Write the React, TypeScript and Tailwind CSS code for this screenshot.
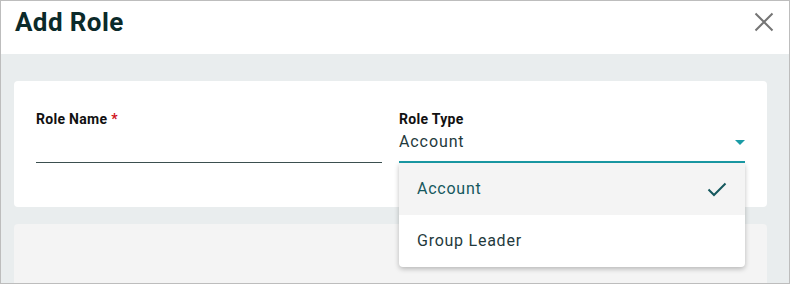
import React from 'react';

const CloseIcon = () => (
  <svg width="20" height="20" viewBox="0 0 20 20" fill="none">
    <path d="M1.5 1.5 L18.5 18.5 M18.5 1.5 L1.5 18.5" stroke="#757575" strokeWidth="2" />
  </svg>
);

const CheckIcon = () => (
  <svg width="20" height="15" viewBox="0 0 20 15" fill="none">
    <path d="M1.5 7.5 L7 13 L18.5 1.5" stroke="#15585e" strokeWidth="2" />
  </svg>
);

const App: React.FC = () => {
  return (
    <div
      className="w-[790px] h-[284px] border border-[#bdbdbd] flex flex-col overflow-hidden bg-[#e9edee]"
      style={{ fontFamily: 'Roboto, "Noto Sans", sans-serif' }}
    >
      {/* header */}
      <div className="h-[53px] shrink-0 bg-white flex items-center justify-between pl-[14px] pr-[15px]">
        <h1 className="text-[26px] font-bold text-[#0b2a2a] leading-none tracking-[0.4px] -mt-[12px]">Add Role</h1>
        <button className="-mt-[12px]">
          <CloseIcon />
        </button>
      </div>

      {/* body */}
      <div className="flex-1 pl-[13px] pr-[22px] pt-[27px] flex flex-col gap-[17px]">
        <div className="bg-white rounded-[4px] h-[126px] px-[22px] pt-[30px] flex gap-[17px]">
          <div className="flex-1 flex flex-col">
            <label className="text-[14px] font-bold text-[#111] leading-4 tracking-[0.3px]">
              Role Name <span className="text-[#d0121b]">*</span>
            </label>
            <div className="h-[36px] border-b border-[#3b4f4f]" />
          </div>
          <div className="flex-1 flex flex-col relative">
            <label className="text-[14px] font-bold text-[#111] leading-4 tracking-[0.3px]">Role Type</label>
            <div className="h-[36px] border-b-2 border-[#1a9ba6] flex items-center justify-between">
              <span className="text-[16px] text-[#1f3a3d] tracking-[0.9px] -mt-[4px]">Account</span>
              <svg width="10" height="5" viewBox="0 0 10 5" className="-mt-[4px]">
                <path d="M0 0 L10 0 L5 5 Z" fill="#1a9ba6" />
              </svg>
            </div>
            <div className="absolute left-0 right-0 top-[52px] bg-white rounded-b-[4px] shadow-[0_2px_5px_rgba(0,0,0,0.25)] z-10 flex flex-col overflow-hidden">
              <div className="h-[52px] bg-[#f4f4f4] flex items-center justify-between pl-[18px] pr-[18px]">
                <span className="text-[16px] text-[#15585e] tracking-[0.75px]">Account</span>
                <CheckIcon />
              </div>
              <div className="h-[52px] flex items-center pl-[18px]">
                <span className="text-[16px] text-[#1f3a3d] tracking-[0.75px]">Group Leader</span>
              </div>
            </div>
          </div>
        </div>
        <div className="flex-1 bg-[#f4f4f4] rounded-t-[4px]" />
      </div>
    </div>
  );
};

export default App;
